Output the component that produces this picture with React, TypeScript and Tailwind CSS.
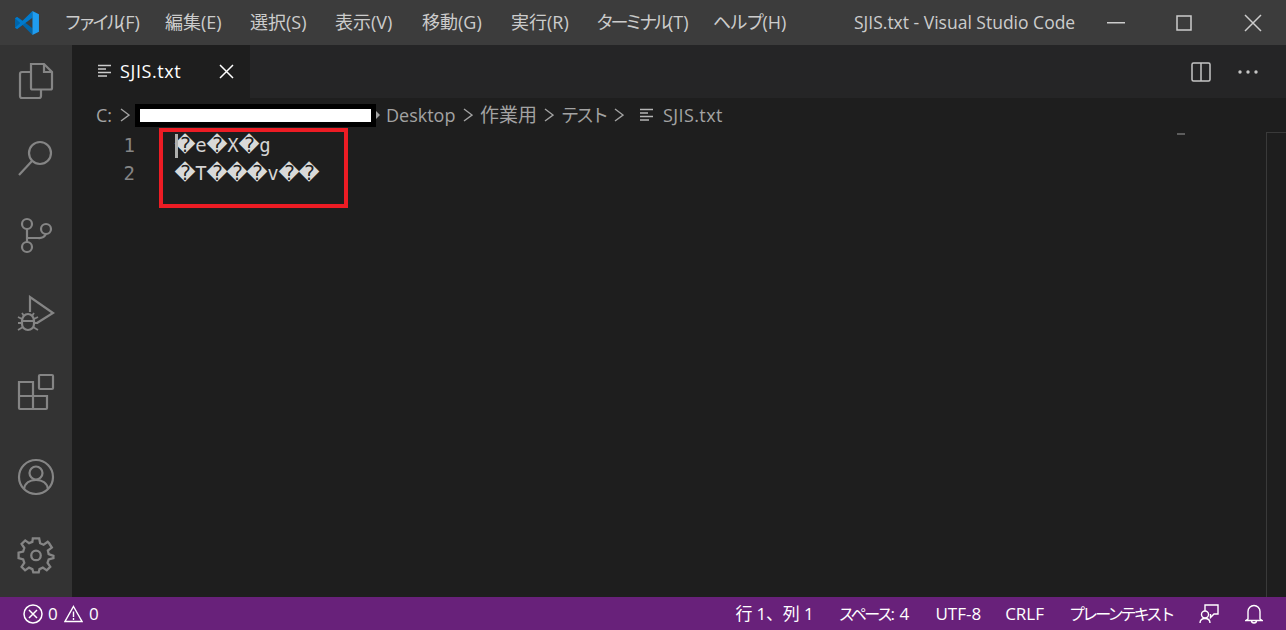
const ui = '"Open Sans", "Noto Sans CJK JP", sans-serif';

const menus = [
  { kana: "ファイル", rest: "(F)", w: "w-[77px]", track: "tracking-[-4px]" },
  { kana: "編集", rest: "(E)", w: "w-[61px]", track: "" },
  { kana: "選択", rest: "(S)", w: "w-[61px]", track: "" },
  { kana: "表示", rest: "(V)", w: "w-[63px]", track: "" },
  { kana: "移動", rest: "(G)", w: "w-[65px]", track: "" },
  { kana: "実行", rest: "(R)", w: "w-[61px]", track: "" },
  { kana: "ターミナル", rest: "(T)", w: "w-[93px]", track: "tracking-[-3.6px]" },
  { kana: "ヘルプ", rest: "(H)", w: "w-[72px]", track: "tracking-[-1.5px]" },
];

function Logo() {
  return (
    <svg width="26" height="26" viewBox="0 0 100 100" className="shrink-0">
      <path d="M12 27 L4 32 V68 L12 73 L32 57 L71 96 V70 L30 38 Z" fill="#0065a9" />
      <path d="M4 68 L12 73 L71 30 V4 L32 42 L12 27 L4 32 L24 50 Z" fill="#007acc" />
      <path d="M71 4 L96 16 V84 L71 96 Z" fill="#1f9cf0" />
    </svg>
  );
}

function Lines({ className }: { className?: string }) {
  return (
    <svg width="14" height="14" viewBox="0 0 14 14" className={className} fill="none" stroke="currentColor" strokeWidth="1.4">
      <path d="M0 1.5H13M0 5H8M0 8.5H13M0 12H9" />
    </svg>
  );
}

function Chevron({ size = 10, h = 14 }: { size?: number; h?: number }) {
  return (
    <svg width={size} height={h} viewBox="0 0 10 14" fill="none" stroke="#a3a3a3" strokeWidth="1.4" className="shrink-0">
      <path d="M1 1L9 7L1 13" />
    </svg>
  );
}

function ActivityIcon({ children, mb }: { children: React.ReactNode; mb: string }) {
  return (
    <svg width="38" height="38" viewBox="0 0 38 38" fill="none" stroke="#858585" strokeWidth="2.2" className={mb}>
      {children}
    </svg>
  );
}

function ActivityBar() {
  return (
    <div className="flex w-[72px] shrink-0 flex-col items-center bg-[#333333] pt-[17px]">
      {/* files */}
      <ActivityIcon mb="mb-[39px]">
        <path d="M14 2H27L35 10V26a1.5 1.5 0 0 1-1.500 1.500H15.500A1.500 1.500 0 0 1 14 26Z" />
        <path d="M27 2V10H35" />
        <path d="M14 10H5A2 2 0 0 0 3 12V34A2 2 0 0 0 5 36H22A2 2 0 0 0 24 34V27.500" />
      </ActivityIcon>
      {/* search */}
      <ActivityIcon mb="mb-[40px]">
        <circle cx="23" cy="14" r="11" />
        <path d="M15 22L2 36" />
      </ActivityIcon>
      {/* source control */}
      <ActivityIcon mb="mb-[40px]">
        <circle cx="10" cy="7" r="5" />
        <circle cx="10" cy="30" r="5" />
        <circle cx="29" cy="12" r="5" />
        <path d="M10 12V25M10 21H21A8 8 0 0 0 29 17" />
      </ActivityIcon>
      {/* run and debug */}
      <ActivityIcon mb="mb-[40px]">
        <path d="M13 17V2L36 18L20 28" />
        <path d="M5 26a6 7 0 0 1 12 0V29a6 6 0 0 1-12 0Z" />
        <path d="M1 22L5 24M21 22L17 24M1 28H5M21 28H17M1 35L6 32M21 35L16 32M7 21L5 18M15 21L17 18M5 26H17" strokeWidth="1.800" />
      </ActivityIcon>
      {/* extensions */}
      <ActivityIcon mb="mb-[47px]">
        <rect x="22" y="2" width="14" height="14" rx="1" />
        <path d="M2 9H16V36H3A1 1 0 0 1 2 35ZM2 23H30V35A1 1 0 0 1 29 36H16" />
      </ActivityIcon>
      {/* account */}
      <ActivityIcon mb="mb-[40px]">
        <circle cx="19" cy="19" r="17" />
        <circle cx="19" cy="15" r="6.500" />
        <path d="M7 31C8 25 13 22 19 22C25 22 30 25 31 31" />
      </ActivityIcon>
      {/* settings */}
      <svg width="38" height="38" viewBox="0 0 24 24" fill="none" stroke="#858585" strokeWidth="1.450">
        <path d="M10 1.500H14L14.600 4.600L16.800 5.500L19.400 3.700L20.300 4.600L22 7.300L19.500 9.200L20 11.500L23 12.500V14L20 14.800L19.300 17L21 19.500L18.800 21.700L16.300 20L14.200 20.900L13.700 23H10.300L9.700 20.900L7.600 20L5.100 21.700L2.900 19.500L4.600 17L3.900 14.800L1 14V10.500L3.900 9.800L4.600 7.600L2.900 5L5.200 2.800L7.600 4.500L9.700 3.700Z" />
        <circle cx="12" cy="12.300" r="3" />
      </svg>
    </div>
  );
}

function Line({ n, parts, first }: { n: number; parts: string[]; first?: boolean }) {
  return (
    <div className="flex h-[28px] items-center">
      <span className="w-[63px] shrink-0 text-right text-[#858585]">{n}</span>
      <span className="relative ml-[40px] flex">
        {first && <span className="absolute left-0 top-[3px] h-[24px] w-[3px] bg-[#aeafad]" />}
        {parts.map((c, i) =>
          c === "?" ? (
            <span key={i} className="flex w-[20px] justify-center font-['DejaVu_Sans'] text-[20.5px] leading-[28px] text-[#d9d9d9]">
              {"\uFFFD"}
            </span>
          ) : (
            <span key={i} className="w-[12px] text-center leading-[28px]">
              {c}
            </span>
          ),
        )}
      </span>
    </div>
  );
}

function Editor() {
  return (
    <div className="flex min-h-0 flex-1 bg-[#1e1e1e]">
      <div className="relative flex-1 font-['DejaVu_Sans_Mono',monospace] text-[19px] text-[#d4d4d4]">
        <div className="-mt-px">
          <Line n={1} parts={["?", "e", "?", "X", "?", "g"]} first />
          <Line n={2} parts={["?", "T", "?", "?", "?", "v", "?", "?"]} />
        </div>
        {/* red annotation */}
        <div className="absolute left-[87px] top-[-4px] h-[80px] w-[189px] border-[4px] border-[#ed1c24]" />
      </div>
      {/* minimap speck */}
      <div className="w-[89px] shrink-0 pt-[1px]">
        <div className="h-[2px] w-[8px] bg-[#5c5c5c]" />
      </div>
      <div className="w-[20px] shrink-0 border-l border-t border-[#3a3a3a]" />
    </div>
  );
}

export default function App() {
  return (
    <div className="flex h-[630px] w-[1286px] flex-col overflow-hidden bg-[#1e1e1e] text-[17px]" style={{ fontFamily: ui }}>
      {/* title bar */}
      <div className="flex h-[45px] shrink-0 items-center bg-[#3c3c3c] pl-[14px] text-[#cccccc]">
        <Logo />
        <div className="ml-[24px] flex gap-[24px] text-[18px] whitespace-nowrap">
          {menus.map((m) => (
            <span key={m.kana} className={m.w}>
              <span className={m.track}>{m.kana}</span>
              {m.rest}
            </span>
          ))}
        </div>
        <span className="ml-[69px] w-[253px] whitespace-nowrap text-[17.5px]">SJIS.txt - Visual Studio Code</span>
        <svg width="18" height="2" className="shrink-0"><rect width="18" height="1.500" fill="#cccccc" /></svg>
        <svg width="16" height="16" className="ml-[51px] shrink-0" fill="none" stroke="#cccccc" strokeWidth="1.500"><rect x="1" y="1" width="14" height="14" /></svg>
        <svg width="18" height="18" className="ml-[52px] shrink-0" fill="none" stroke="#cccccc" strokeWidth="1.500"><path d="M1 1L17 17M17 1L1 17" /></svg>
      </div>

      <div className="flex min-h-0 flex-1">
        <ActivityBar />
        <div className="flex min-w-0 flex-1 flex-col">
          {/* tabs */}
          <div className="flex h-[53px] shrink-0 items-center bg-[#252526]">
            <div className="flex h-full w-[178px] items-center bg-[#1e1e1e] pl-[26px] text-white">
              <Lines className="mr-[8px] mt-[-2px] text-[#cccccc]" />
              <span className="w-[60px] text-[18px] tracking-[0.6px] whitespace-nowrap">SJIS.txt</span>
              <svg width="15" height="15" className="ml-[39px]" fill="none" stroke="#ffffff" strokeWidth="1.500"><path d="M1 1L14 14M14 1L1 14" /></svg>
            </div>
            <div className="flex-1" />
            <svg width="20" height="20" fill="none" stroke="#c5c5c5" strokeWidth="1.500" className="mr-[27px]">
              <rect x="1" y="1" width="18" height="18" rx="1.500" />
              <path d="M10 1V19" />
            </svg>
            <svg width="20" height="4" fill="#c5c5c5" className="mr-[28px]">
              <circle cx="2" cy="2" r="1.700" />
              <circle cx="10" cy="2" r="1.700" />
              <circle cx="18" cy="2" r="1.700" />
            </svg>
          </div>
          {/* breadcrumbs */}
          <div className="flex h-[34px] shrink-0 items-center bg-[#1e1e1e] pl-[24px] text-[18px] whitespace-nowrap text-[#a3a3a3]">
            <span className="w-[24px]">C:</span>
            <Chevron />
            <div className="ml-[5px] flex h-[23px] w-[241px] items-center justify-center bg-black">
              <div className="h-[13px] w-[231px] bg-white" />
            </div>
            <svg width="5" height="8" className="mr-[5px] shrink-0" fill="#a3a3a3"><path d="M0 0L4 4L0 8Z" /></svg>
            <span className="w-[70px]">Desktop</span>
            <span className="mx-[7px]"><Chevron /></span>
            <span className="w-[57px] text-[19px]">作業用</span>
            <span className="mx-[7px]"><Chevron /></span>
            <span className="w-[45px] tracking-[-3px]">テスト</span>
            <span className="mx-[8px]"><Chevron /></span>
            <Lines className="ml-[8px] mr-[9px] shrink-0 text-[#b5b5b5]" />
            <span className="tracking-[0.4px]">SJIS.txt</span>
          </div>
          <Editor />
        </div>
      </div>

      {/* status bar */}
      <div className="flex h-[33px] shrink-0 items-center bg-[#68217a] pl-[23px] text-[17px] whitespace-nowrap text-white">
        <svg width="20" height="20" fill="none" stroke="#ffffff" strokeWidth="1.500" className="shrink-0">
          <circle cx="10" cy="10" r="9" />
          <path d="M6 6L14 14M14 6L6 14" />
        </svg>
        <span className="ml-[5px] w-[10px]">0</span>
        <svg width="19" height="18" fill="none" stroke="#ffffff" strokeWidth="1.400" className="ml-[6px] shrink-0">
          <path d="M9.500 1.500L18 16.500H1Z" />
          <path d="M9.500 6.500V12M9.500 13V15" />
        </svg>
        <span className="ml-[6px] w-[10px]">0</span>
        <div className="flex-1" />
        <span className="tracking-[-0.2px]">行 1、列 1</span>
        <span className="ml-[25px] w-[72px]"><span className="text-[16px] tracking-[-2.5px]">スペース</span>: 4</span>
        <span className="ml-[25px]">UTF-8</span>
        <span className="ml-[24px]">CRLF</span>
        <span className="ml-[25px] w-[105px] text-[16px] tracking-[-2.9px]">プレーンテキスト</span>
        <svg width="20" height="20" viewBox="0 0 20 20" fill="none" stroke="#ffffff" strokeWidth="1.400" className="ml-[25px] shrink-0">
          <path d="M6 7V1H19V10H15L11.500 13.500V10" />
          <circle cx="6" cy="10.500" r="3.500" />
          <path d="M1 19C1 16 3 14.500 6 14.500C9 14.500 11 16 11 19" />
        </svg>
        <svg width="18" height="20" viewBox="0 0 18 20" fill="none" stroke="#ffffff" strokeWidth="1.400" className="ml-[26px] mr-[23px] shrink-0">
          <path d="M3 15V7.500A6 6 0 0 1 15 7.500V15L17 16.500H1Z" />
          <path d="M6.500 16.500A2.500 2.500 0 0 0 11.500 16.500" />
        </svg>
      </div>
    </div>
  );
}
